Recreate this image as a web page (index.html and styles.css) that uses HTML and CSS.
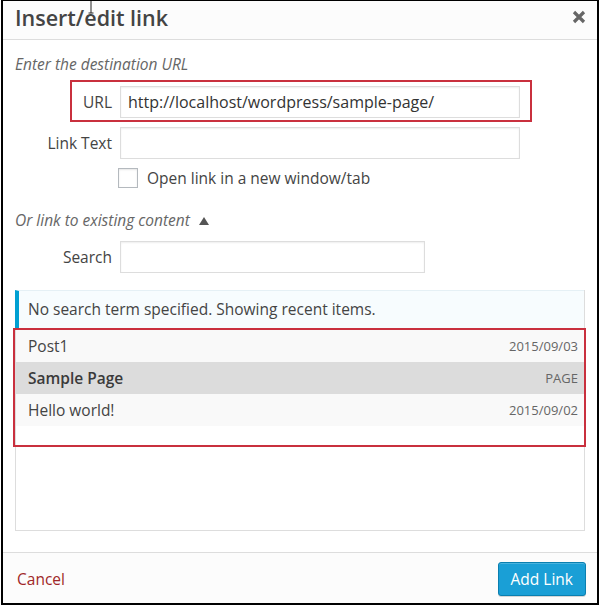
FILE: index.html
```html
<!DOCTYPE html>
<html>
<head>
<meta charset="utf-8">
<link rel="stylesheet" href="styles.css">
</head>
<body>
<div class="dialog">
  <div class="header">
    <h1 class="title">Insert/edit link</h1>
    <svg class="close" width="14" height="14" viewBox="0 0 14 14"><path d="M2 2 L12 12 M12 2 L2 12" stroke="#666" stroke-width="3.2" stroke-linecap="butt"/></svg>
    <svg class="cursor" width="8" height="14" viewBox="0 0 8 14"><path d="M4 0 V12 M1.5 12 H6.5" stroke="#222" stroke-width="1"/></svg>
  </div>
  <div class="content">
    <p class="howto">Enter the destination URL</p>
    <div class="row url-row">
      <label class="lbl">URL</label>
      <div class="field field-wide">http://localhost/wordpress/sample-page/</div>
      <div class="annot annot-url"></div>
    </div>
    <div class="row">
      <label class="lbl">Link Text</label>
      <div class="field field-wide"></div>
    </div>
    <div class="check-row">
      <span class="checkbox"></span>
      <span class="check-text">Open link in a new window/tab</span>
    </div>
    <p class="howto toggle">Or link to existing content <span class="tri"></span></p>
    <div class="row">
      <label class="lbl">Search</label>
      <div class="field field-search"></div>
    </div>
    <div class="results">
      <div class="notice">No search term specified. Showing recent items.</div>
      <ul class="items">
        <li class="item"><span>Post1</span><span class="meta">2015/09/03</span></li>
        <li class="item selected"><span>Sample Page</span><span class="meta">PAGE</span></li>
        <li class="item"><span>Hello world!</span><span class="meta">2015/09/02</span></li>
      </ul>
      <div class="annot annot-list"></div>
    </div>
  </div>
  <div class="footer">
    <a class="cancel">Cancel</a>
    <button class="btn-primary">Add Link</button>
  </div>
</div>
</body>
</html>
```
FILE: styles.css
```css
* { box-sizing: border-box; }
html, body { margin: 0; padding: 0; background: #fff; }
body { font-family: "Open Sans", "Liberation Sans", sans-serif; color: #444; }

.dialog {
  margin-left: 1px;
  width: 598px;
  height: 605px;
  border: 2px solid #000;
  border-top-width: 1px;
  display: flex;
  flex-direction: column;
  background: #fff;
}

.header {
  position: relative;
  height: 39px;
  background: #fcfcfc;
  border-bottom: 1px solid #ddd;
  display: flex;
  align-items: flex-start;
  justify-content: space-between;
  padding: 0 11px 0 12px;
}
.title {
  margin: 0;
  font-size: 21.5px;
  font-weight: 600;
  color: #444;
  line-height: 34px;
}
.close { margin-top: 9px; }
.cursor { position: absolute; left: 84px; top: 0; }

.content {
  flex: 1;
  padding: 14px 12px 0 12px;
}
.howto {
  margin: 0;
  font-style: italic;
  font-size: 15.5px;
  line-height: 20px;
  color: #666;
}
.row {
  position: relative;
  display: flex;
  align-items: center;
  gap: 8px;
}
.url-row { margin-top: 12px; }
.row + .row { margin-top: 9px; }
.lbl {
  width: 97px;
  text-align: right;
  font-size: 15.5px;
  color: #444;
}
.field {
  height: 32px;
  border: 1px solid #ddd;
  box-shadow: inset 0 1px 2px rgba(0,0,0,0.07);
  background: #fff;
  font-size: 16px;
  color: #333;
  line-height: 30px;
  padding-left: 7px;
}
.field-wide { width: 400px; }
.field-search { width: 305px; }

.annot {
  position: absolute;
  border: 2px solid #c9303e;
  pointer-events: none;
}
.annot-url { left: 55px; top: -6px; width: 462px; height: 42px; }

.check-row {
  display: flex;
  align-items: center;
  gap: 9px;
  height: 21px;
  margin: 8px 0 0 103px;
}
.checkbox {
  width: 20px;
  height: 20px;
  border: 1px solid #b4b9be;
  background: #fff;
  box-shadow: inset 0 1px 2px rgba(0,0,0,0.1);
}
.check-text { font-size: 15.5px; color: #444; line-height: 20px; }

.toggle { margin-top: 22px; margin-bottom: 11px; }
.tri {
  display: inline-block;
  width: 0; height: 0;
  border-left: 5px solid transparent;
  border-right: 5px solid transparent;
  border-bottom: 8px solid #555;
  margin-left: 5px;
  vertical-align: 1px;
}

.results {
  position: relative;
  margin-top: 17px;
  height: 241px;
  border: 1px solid #ddd;
  border-top: none;
}
.notice {
  height: 40px;
  background: #f7fcfe;
  border-left: 4px solid #00a0d2;
  border-top: 1px solid #e5f0f5;
  margin-left: -1px;
  padding-left: 9px;
  font-size: 15.5px;
  line-height: 37px;
  color: #444;
}
.items { list-style: none; margin: 0; padding: 0; }
.item {
  height: 32px;
  display: flex;
  justify-content: space-between;
  align-items: center;
  padding: 0 6px 0 12px;
  background: #f9f9f9;
  font-size: 15.5px;
  color: #444;
}
.item.selected { background: #dcdcdc; font-weight: 600; color: #3a3a3a; }
.meta { font-size: 13px; color: #666; font-weight: 400; text-transform: uppercase; }
.annot-list { left: -3px; top: 38px; width: 573px; height: 119px; }

.footer {
  height: 51px;
  background: #fcfcfc;
  border-top: 1px solid #ddd;
  display: flex;
  align-items: center;
  justify-content: space-between;
  padding: 2px 11px 0 14px;
}
.cancel { color: #a02828; font-size: 15.5px; text-decoration: none; }
.btn-primary {
  height: 34px;
  padding: 0 12px;
  background: #1a9fd6;
  border: 1px solid #0a7fb0;
  border-radius: 3px;
  color: #fff;
  font-family: "Open Sans", "Liberation Sans", sans-serif;
  font-size: 15.5px;
  box-shadow: inset 0 1px 0 rgba(120,200,230,0.5), 0 1px 0 rgba(0,0,0,0.15);
}
```
